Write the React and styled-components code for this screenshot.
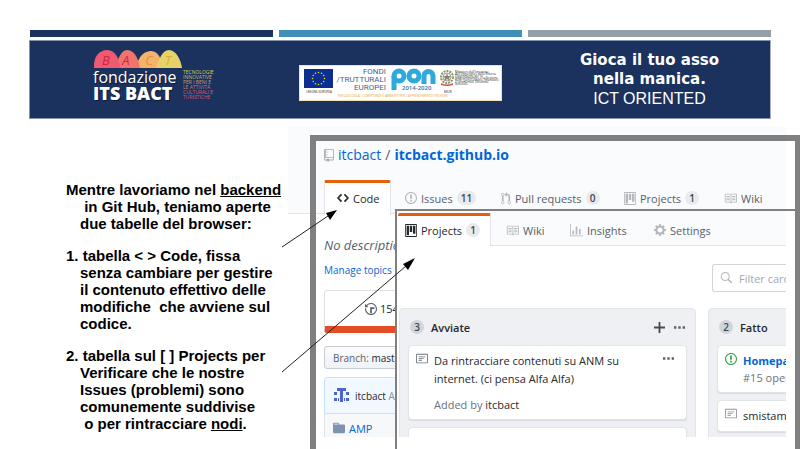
import React from "react";
import styled, { createGlobalStyle, css } from "styled-components";

const ui = `"Open Sans", "Noto Sans", sans-serif`;
const deck = `"Liberation Sans", Arial, sans-serif`;

const GlobalStyle = createGlobalStyle`
  * { box-sizing: border-box; }
  body { margin: 0; background: #fff; }
  h1, h2, h3, p { margin: 0; padding: 0; font-size: inherit; font-weight: inherit; }
  a { color: inherit; text-decoration: none; }
  button { font: inherit; color: inherit; background: none; border: 0; padding: 0; }
`;

const Slide = styled.div`
  display: flex;
  flex-direction: column;
  height: 100vh;
  padding-top: 30px;
  overflow: hidden;
`;

const Stripes = styled.div`
  display: grid;
  grid-template-columns: repeat(3, 1fr);
  gap: 6px;
  margin: 0 29px 3px 30px;
`;

const Stripe = styled.span`
  height: 7px;
  background: ${(p) => p.$tone};
`;

const Banner = styled.header`
  display: grid;
  grid-template-columns: 269px 1fr 241px;
  margin: 0 29px;
  height: 79px;
  background: #1b325f;
  border: 1px solid #8493ad;
  border-right-color: #a9b3c5;
  font-family: ${deck};
  color: #fff;
`;

const Foundation = styled.div`
  display: grid;
  grid-template-columns: 88px 34px;
  column-gap: 2px;
  align-content: start;
  padding: 9px 0 0 63px;
  font-family: ${ui};
`;

const Domes = styled.svg`
  display: block;
  grid-column: 1 / 3;
  width: 90px;
  height: 18px;
`;

const FoundationName = styled.h2`
  font-size: 16px;
  line-height: 18px;
  font-weight: 500;
  white-space: nowrap;
  text-shadow: 1px 1px 1px #0b1a38;
`;

const FoundationStrong = styled.strong`
  display: block;
  font-size: 18px;
  line-height: 15px;
  font-weight: 800;
`;

const Motto = styled.p`
  font-size: 5px;
  line-height: 5px;
  padding-top: 2px;
  white-space: nowrap;
`;

const MottoLine = styled.span`
  display: block;
  color: ${(p) => p.$tone};
`;

const Funds = styled.div`
  display: grid;
  grid-template-columns: 30px 48px 44px 16px 1fr;
  grid-template-rows: 26px 6px;
  column-gap: 4px;
  width: 203px;
  height: 36px;
  margin-top: 24px;
  padding: 2px 1px 0 4px;
  background: #fff;
  border: 1px solid #f3e3b4;
  color: #4a6485;
  font-family: ${ui};
`;

const FundsLeft = styled.div`
  grid-row: 1 / 3;
  padding-top: 1px;
  font-size: 3px;
  line-height: 8px;
  text-align: center;
  white-space: nowrap;
  color: #222;
`;

const FundsTitle = styled.p`
  font-family: Roboto, sans-serif;
  font-size: 8px;
  line-height: 8px;
  text-align: right;
  white-space: nowrap;
  justify-self: end;
`;

const FundsNote = styled.p`
  grid-area: 2 / 2 / 3 / 5;
  font-size: 3px;
  line-height: 4px;
  white-space: nowrap;
  color: #e2a53a;
`;

const FundsArt = styled.svg`
  display: block;
  overflow: visible;
`;

const Ministry = styled.p`
  font-size: 3px;
  line-height: 2px;
  padding-top: 3px;
  margin-left: -3px;
  color: #222;
`;

const Slogan = styled.h1`
  align-self: center;
  font-size: 16px;
  line-height: 19px;
  text-align: center;
  white-space: nowrap;
`;

const SloganStrong = styled.strong`
  display: block;
  font-family: "DejaVu Sans", ${deck};
  font-size: 15px;
  font-weight: 700;
`;

const Stage = styled.main`
  position: relative;
  display: grid;
  grid-template-columns: 288px minmax(0, 1fr);
  flex: 1;
  min-height: 0;
  margin-top: 7px;
`;

const Notes = styled.section`
  display: flex;
  flex-direction: column;
  gap: 15px;
  padding: 55px 0 0 66px;
  font-family: ${deck};
  font-size: 15px;
  line-height: 17px;
  font-weight: 700;
  color: #000;
`;

const Note = styled.p`
  padding-left: 14px;
  text-indent: -14px;
  white-space: pre;
`;

const Desk = styled.section`
  position: relative;
  min-height: 0;
  overflow: hidden;
`;

const Frame = styled.div`
  position: absolute;
  inset: 9px 0 -20px 22px;
  border: 6px solid #808080;
  border-right-width: 5px;
  pointer-events: none;
`;

const Repo = styled.div`
  height: calc(100% - 12px);
  margin-right: 14px;
  overflow: hidden;
  background: #fff;
  font-family: ${ui};
  color: #24292e;
`;

const RepoHead = styled.header`
  height: 88px;
  padding-left: 36px;
  background: #fafbfc;
  border-bottom: 1px solid #e1e4e8;
`;

const RepoTitle = styled.h2`
  display: flex;
  align-items: center;
  gap: 4px;
  height: 54px;
  padding-top: 4px;
  font-size: 14px;
  line-height: 20px;
  color: #586069;
  white-space: nowrap;
`;

const BlueLink = styled.a`
  color: #0366d6;
  font-weight: ${(p) => (p.$strong ? 700 : 400)};
`;

const Tabs = styled.nav`
  display: grid;
  grid-template-columns: ${(p) => p.$columns};
  height: ${(p) => (p.$short ? "32px" : "34px")};
  font-size: 11px;
`;

const Tab = styled.a`
  display: flex;
  align-items: center;
  gap: 4px;
  padding-top: 2px;
  color: #586069;
  white-space: nowrap;
  ${(p) =>
    p.$active &&
    css`
      padding: 0 0 2px;
      color: #24292e;
      background: #fff;
      border: solid #e1e4e8;
      border-width: 3px 1px 0 0;
      border-top-color: #e36209;
      border-radius: 2px 2px 0 0;
    `}
  ${(p) =>
    p.$first &&
    css`
      margin: 0 14px -1px 0;
      padding-left: 12px;
      border-left-width: 1px;
    `}
`;

const Count = styled.span`
  min-width: 14px;
  padding: 0 4px;
  border-radius: 8px;
  background: ${(p) => (p.$dark ? "#d1d5da" : "#e8eaed")};
  color: #3f464d;
  font-size: 10px;
  line-height: 14px;
  text-align: center;
  font-weight: 600;
`;

const Icon = styled.svg`
  display: block;
  flex: none;
  fill: ${(p) => p.$tone || "#b4b8bd"};
`;

const RepoBody = styled.div`
  padding: 21px 0 0 36px;
  white-space: nowrap;
`;

const Description = styled.p`
  font-size: 13px;
  line-height: 20px;
  font-style: italic;
  color: #586069;
`;

const Topics = styled.p`
  padding-top: 6px;
  font-size: 10px;
  line-height: 18px;
`;

const Commits = styled.div`
  display: flex;
  align-items: center;
  gap: 3px;
  height: 43px;
  margin-top: 11px;
  padding-left: 40px;
  border: 1px solid #dfe2e5;
  border-bottom: 7px solid #e34c26;
  border-radius: 3px;
  font-size: 11px;
  color: #24292e;
`;

const Branch = styled.button`
  display: block;
  height: 23px;
  margin: 13px 0 8px;
  padding: 0 8px;
  border: 1px solid #c9ccd0;
  border-radius: 3px;
  background: linear-gradient(#fafbfc, #eff3f6);
  font-size: 10px;
  color: #586069;
`;

const Dark = styled.strong`
  color: #24292e;
  font-weight: 500;
`;

const Commit = styled.div`
  display: flex;
  align-items: center;
  gap: 6px;
  height: 37px;
  padding-left: 9px;
  border: 1px solid #c8e1ff;
  border-radius: 3px 3px 0 0;
  background: #f1f8ff;
  font-size: 10px;
  color: #8a929a;
`;

const FileRow = styled.div`
  display: flex;
  align-items: center;
  gap: 4px;
  height: 28px;
  padding-left: 8px;
  border-left: 1px solid #dfe2e5;
  background: #f6f8fa;
  font-size: 11px;
`;

const BoardWindow = styled.div`
  position: absolute;
  inset: 83px 5px -20px 107px;
  border: 2px solid #808080;
  border-right: 0;
  background: #fff;
`;

const Board = styled.div`
  height: calc(100% - 30px);
  margin-right: 9px;
  overflow: hidden;
  font-family: ${ui};
  color: #24292e;
  white-space: nowrap;
`;

const BoardTabs = styled.div`
  padding: 2px 0 0 1px;
  background: #fafbfc;
  border-bottom: 1px solid #e1e4e8;
`;

const BoardTab = styled(Tab)`
  ${(p) =>
    p.$active &&
    css`
      margin: 0 15px -1px 0;
      padding-left: 7px;
    `}
`;

const Filter = styled.label`
  display: flex;
  align-items: center;
  gap: 7px;
  height: 28px;
  margin: 18px 0 16px 315px;
  padding-left: 7px;
  border: 1px solid #d1d5da;
  border-right: 0;
  border-radius: 3px 0 0 3px;
`;

const FilterInput = styled.input`
  flex: 1;
  min-width: 0;
  padding: 0;
  border: 0;
  background: none;
  font-family: ${ui};
  font-size: 11px;
  color: #24292e;
  &::placeholder { color: #a3aab1; opacity: 1; }
`;

const Columns = styled.div`
  display: grid;
  grid-template-columns: 297px 297px;
  gap: 12px;
  margin-left: 2px;
`;

const Column = styled.section`
  display: flex;
  flex-direction: column;
  gap: 7px;
  height: 200px;
  padding: 0 8px;
  border: 1px solid #e1e4e8;
  border-radius: 4px;
  background: #eff0f3;
`;

const ColumnHead = styled.header`
  display: flex;
  align-items: center;
  gap: 7px;
  height: 36px;
  margin-bottom: -7px;
  padding: 0 2px;
  font-size: 11px;
`;

const ColumnTitle = styled.h3`
  flex: 1;
  font-weight: 600;
`;

const IconButton = styled.button`
  display: flex;
  margin-left: 2px;
`;

const Card = styled.article`
  display: grid;
  grid-template-columns: 12px minmax(0, 1fr) auto;
  column-gap: 6px;
  align-items: start;
  padding: 6px 12px 6px 7px;
  border: 1px solid #e1e4e8;
  border-radius: 4px;
  background: #fff;
  box-shadow: 0 1px 1px #d8dade;
  font-size: 11px;
  line-height: 18px;
`;

const CardText = styled.p`
  white-space: pre-line;
`;

const Meta = styled.p`
  padding-top: ${(p) => (p.$spaced ? "9px" : "0")};
  line-height: 16px;
  color: #6a737d;
`;

const Pointers = styled.svg`
  position: absolute;
  left: 282px;
  top: 80px;
  pointer-events: none;
`;

const glyphs = {
  repo: [12, "M4 9H3V8h1v1zm0-3H3v1h1V6zm0-2H3v1h1V4zm0-2H3v1h1V2zm8-1v12c0 .55-.45 1-1 1H6v2l-1.5-1.5L3 16v-2H1c-.55 0-1-.45-1-1V1c0-.55.45-1 1-1h10c.55 0 1 .45 1 1zm-1 10H1v2h2v-1h3v1h5v-2zm0-10H2v9h9V1z"],
  code: [14, "M9.5 3L8 4.5 11.5 8 8 11.5 9.5 13 14 8 9.5 3zm-5 0L0 8l4.5 5L6 11.5 2.5 8 6 4.5 4.5 3z"],
  issue: [14, "M7 2.3c3.14 0 5.7 2.56 5.7 5.7s-2.56 5.7-5.7 5.7A5.71 5.71 0 0 1 1.3 8c0-3.14 2.56-5.7 5.7-5.7zM7 1C3.14 1 0 4.14 0 8s3.14 7 7 7 7-3.14 7-7-3.14-7-7-7zm1 3H6v5h2V4zm0 6H6v2h2v-2z"],
  pull: [12, "M11 11.28V5c-.03-.78-.34-1.47-.94-2.06C9.46 2.35 8.78 2.03 8 2H7V0L4 3l3 3V4h1c.27.02.48.11.69.31.21.2.3.42.31.69v6.28A1.993 1.993 0 0 0 10 15a1.993 1.993 0 0 0 1-3.72zm-1 2.92c-.66 0-1.2-.55-1.2-1.2 0-.65.55-1.2 1.2-1.2.65 0 1.2.55 1.2 1.2 0 .65-.55 1.2-1.2 1.2zM4 3c0-1.11-.89-2-2-2a1.993 1.993 0 0 0-1 3.72v6.56A1.993 1.993 0 0 0 2 15a1.993 1.993 0 0 0 1-3.72V4.72c.59-.34 1-.98 1-1.72zm-.8 10c0 .66-.55 1.2-1.2 1.2-.65 0-1.2-.55-1.2-1.2 0-.65.55-1.2 1.2-1.2.65 0 1.2.55 1.2 1.2zM2 4.2C1.34 4.2.8 3.65.8 3c0-.65.55-1.2 1.2-1.2.65 0 1.2.55 1.2 1.2 0 .65-.55 1.2-1.2 1.2z"],
  project: [15, "M10 12h3V2h-3v10zm-4-2h3V2H6v8zm-4 4h3V2H2v12zm-1 1h13V1H1v14zM14 0H1a1 1 0 0 0-1 1v14a1 1 0 0 0 1 1h13a1 1 0 0 0 1-1V1a1 1 0 0 0-1-1z"],
  book: [16, "M3 5h4v1H3V5zm0 3h4V7H3v1zm0 2h4V9H3v1zm11-5h-4v1h4V5zm0 2h-4v1h4V7zm0 2h-4v1h4V9zm2-6v9c0 .55-.45 1-1 1H9.5l-1 1-1-1H2c-.55 0-1-.45-1-1V3c0-.55.45-1 1-1h5.5l1 1 1-1H15c.55 0 1 .45 1 1zm-8 .5L7.5 3H2v9h6V3.5zm7-.5H9.5l-.5.5V12h6V3z"],
  graph: [16, "M16 14v1H0V0h1v14h15zM5 13H3V8h2v5zm4 0H7V3h2v10zm4 0h-2V6h2v7z"],
  gear: [14, "M14 8.77v-1.6l-1.94-.64-.45-1.09.88-1.84-1.13-1.13-1.81.91-1.09-.45-.69-1.92h-1.6l-.63 1.94-1.11.45-1.84-.88-1.13 1.13.91 1.81-.45 1.09L0 7.23v1.59l1.94.64.45 1.09-.88 1.84 1.13 1.13 1.81-.91 1.09.45.69 1.92h1.59l.63-1.94 1.11-.45 1.84.88 1.13-1.13-.92-1.81.47-1.09L14 8.75v.02zM7 11c-1.66 0-3-1.34-3-3s1.34-3 3-3 3 1.34 3 3-1.34 3-3 3z"],
  note: [14, "M3 10h4V9H3v1zm0-2h6V7H3v1zm0-2h8V5H3v1zm10 6H1V3h12v9zM1 2c-.55 0-1 .45-1 1v9c0 .55.45 1 1 1h12c.55 0 1-.45 1-1V3c0-.55-.45-1-1-1H1z"],
  plus: [12, "M12 9H7v5H5V9H0V7h5V2h2v5h5v2z"],
  dots: [14, "M0 6.500h3v3H0zM5.500 6.500h3v3h-3zM11 6.500h3v3h-3z"],
  search: [16, "M15.7 13.3l-3.81-3.83A5.93 5.93 0 0 0 13 6c0-3.31-2.69-6-6-6S1 2.69 1 6s2.69 6 6 6c1.3 0 2.48-.41 3.47-1.11l3.83 3.81c.19.2.45.3.7.3.25 0 .52-.09.7-.3a.996.996 0 0 0 0-1.41v.01zM7 10.7c-2.59 0-4.7-2.11-4.7-4.7 0-2.59 2.11-4.7 4.7-4.7 2.59 0 4.7 2.11 4.7 4.7 0 2.59-2.11 4.7-4.7 4.7z"],
  folder: [14, "M13 4H7V3c0-.66-.31-1-1-1H1c-.55 0-1 .45-1 1v10c0 .55.45 1 1 1h12c.55 0 1-.45 1-1V5c0-.55-.45-1-1-1zM6 4H1V3h5v1z"],
  history: [14, "M8 13H6V6h5v2H8v5zM7 1C4.81 1 2.87 2.02 1.59 3.59L0 2v4h4L2.5 4.5C3.55 3.17 5.17 2.3 7 2.3c3.14 0 5.7 2.56 5.7 5.7s-2.56 5.7-5.7 5.7A5.71 5.71 0 0 1 1.3 8c0-.34.03-.67.09-1H.08C.03 7.33 0 7.66 0 8c0 3.86 3.14 7 7 7s7-3.14 7-7-3.14-7-7-7z"],
};

function Glyph({ name, width = 12, tone }) {
  const [w, d] = glyphs[name];
  return (
    <Icon $tone={tone} width={width} height={Math.round((width * 16) / w)} viewBox={`0 0 ${w} 16`} aria-hidden="true">
      <path fillRule="evenodd" d={d} />
    </Icon>
  );
}

const motto = [
  ["TECNOLOGIE", "#d9cd5b"],
  ["INNOVATIVE", "#d2b660"],
  ["PER I BENI E", "#d09a6a"],
  ["LE   ATTIVITÀ", "#cf7c6c"],
  ["CULTURALI E", "#d8606f"],
  ["TURISTICHE", "#d8526b"],
];

function BactLogo() {
  return (
    <Foundation>
      <Domes viewBox="0 0 90 18" fontFamily="Open Sans" fontStyle="italic" fontSize="13" textAnchor="middle">
        <path d="M44 18c0-9 5-16 13-17s12 8 12 17z" fill="#f6b26b" />
        <path d="M63 18C66 10 69 0 76 0s12 10 13 18z" fill="#e6d268" />
        <path d="M22 18C25 9 28 0 34 0s11 6 13 18z" fill="#f1746e" />
        <path d="M1 18C0 6 7 0 14 0s12 6 13 18z" fill="#ee5a72" />
        <text x="13" y="15" fill="#d3213f">B</text>
        <text x="33" y="15" fill="#dc2347">A</text>
        <text x="56" y="15" fill="#dc9440">C</text>
        <text x="75" y="15" fill="#cdb53a">T</text>
      </Domes>
      <FoundationName>
        fondazione
        <FoundationStrong>ITS BACT</FoundationStrong>
      </FoundationName>
      <Motto>
        {motto.map(([t, tone]) => (
          <MottoLine key={t} $tone={tone}>{t}</MottoLine>
        ))}
      </Motto>
    </Foundation>
  );
}

function FundsLogo() {
  const stars = Array.from({ length: 12 }, (_, i) => {
    const a = (i * Math.PI) / 6;
    return <circle key={i} cx={14.5 + 6 * Math.sin(a)} cy={9.5 - 6 * Math.cos(a)} r="0.8" fill="#f5d90a" />;
  });
  return (
    <Funds>
      <FundsLeft>
        <FundsArt width="29" height="19" viewBox="0 0 29 19">
          <rect width="29" height="19" fill="#0b2f8f" />
          {stars}
        </FundsArt>
        UNIONE EUROPEA
      </FundsLeft>
      <FundsTitle>FONDI<br />/TRUTTURALI<br />EUROPEI</FundsTitle>
      <FundsArt width="44" height="25" viewBox="0 0 44 25">
        <g fill="none" stroke="#2fa9dc" strokeWidth="5">
          <circle cx="9" cy="8" r="5" />
          <path d="M4 8v14" />
          <circle cx="24" cy="8" r="5" />
          <path d="M34 16V8a4.500 4.500 0 0 1 9 0V16" />
        </g>
        <text x="12" y="22" fontFamily="Open Sans" fontWeight="600" fontSize="6" fill="#3d6f98">2014-2020</text>
      </FundsArt>
      <FundsArt width="16" height="26" viewBox="0 0 16 26">
        <circle cx="9" cy="9" r="6" fill="none" stroke="#7d9a66" strokeWidth="2" strokeDasharray="2 1" />
        <circle cx="9" cy="9" r="4" fill="#f2efe9" stroke="#a79f94" />
        <path d="M9 5l1 3h3l-2 2 1 3-3-2-3 2 1-3-2-2h3z" fill="#8c8379" />
        <path d="M3 15q6 3 12 0v2q-6 2-12 0z" fill="#cf5c50" />
        <text x="6" y="25" fontFamily="Open Sans" fontSize="3" fill="#222">MIUR</text>
      </FundsArt>
      <Ministry>
        Ministero dell'Istruzione, dell'Università e della Ricerca. Dipartimento per la programmazione e la Gestione delle risorse umane, finanziarie e strumentali. Direzione Generale
      </Ministry>
      <FundsNote>PER LA SCUOLA - COMPETENZE E AMBIENTI PER L'APPRENDIMENTO (FSE-FESR)</FundsNote>
    </Funds>
  );
}

export default function App() {
  return (
    <Slide>
      <GlobalStyle />
      <Stripes>
        <Stripe $tone="#1b325f" />
        <Stripe $tone="#418fb9" />
        <Stripe $tone="#969fa9" />
      </Stripes>
      <Banner>
        <BactLogo />
        <FundsLogo />
        <Slogan>
          <SloganStrong>Gioca il tuo asso<br />nella manica.</SloganStrong>
          ICT ORIENTED
        </Slogan>
      </Banner>
      <Stage>
        <Notes>
          <Note>
            Mentre lavoriamo nel <u>backend</u>{"\n"} in Git Hub, teniamo aperte{"\n"}due tabelle del browser:
          </Note>
          <Note>{"1. tabella < > Code, fissa\nsenza cambiare per gestire\nil contenuto effettivo delle\nmodifiche  che avviene sul\ncodice."}</Note>
          <Note>
            {"2. tabella sul [ ] Projects per\nVerificare che le nostre\nIssues (problemi) sono\ncomunemente suddivise\n o per rintracciare "}<u>nodi</u>.
          </Note>
        </Notes>
        <Desk>
          <Repo>
            <RepoHead>
              <RepoTitle>
                <Glyph name="repo" width={10} tone="#a3aab1" />
                <BlueLink href="#owner">itcbact</BlueLink>/<BlueLink href="#repo" $strong>itcbact.github.io</BlueLink>
              </RepoTitle>
              <Tabs $columns="81px 96px 123px 100px 1fr">
                <Tab href="#code" $active $first><Glyph name="code" tone="#24292e" /> Code</Tab>
                <Tab href="#issues"><Glyph name="issue" /> Issues <Count>11</Count></Tab>
                <Tab href="#pulls"><Glyph name="pull" width={10} /> Pull requests <Count>0</Count></Tab>
                <Tab href="#projects"><Glyph name="project" /> Projects <Count>1</Count></Tab>
                <Tab href="#wiki"><Glyph name="book" width={13} /> Wiki</Tab>
              </Tabs>
            </RepoHead>
            <RepoBody>
              <Description>No description</Description>
              <Topics><BlueLink href="#topics">Manage topics</BlueLink></Topics>
              <Commits><Glyph name="history" tone="#586069" /><Dark>154</Dark></Commits>
              <Branch type="button">Branch: <Dark>master</Dark></Branch>
              <Commit>
                <Icon width="15" height="15" viewBox="0 0 15 15" $tone="#4d63cf">
                  <path d="M3 0h9v3H3zM0 4h3v3H0zM12 4h3v3h-3zM6 3h3v11H6zM0 10h3v3H0zM4 10h1v3H4zM10 10h1v3h-1zM12 10h3v3h-3z" />
                </Icon>
                <span><Dark>itcbact</Dark> Add files</span>
              </Commit>
              <FileRow><Glyph name="folder" tone="#7d94ae" /><BlueLink href="#amp">AMP</BlueLink></FileRow>
            </RepoBody>
          </Repo>
          <BoardWindow>
            <Board>
              <BoardTabs>
                <Tabs $short $columns="108px 64px 84px 1fr">
                  <BoardTab href="#p" $active><Glyph name="project" tone="#24292e" /> Projects <Count>1</Count></BoardTab>
                  <BoardTab href="#w"><Glyph name="book" width={13} /> Wiki</BoardTab>
                  <BoardTab href="#i"><Glyph name="graph" width={13} /> Insights</BoardTab>
                  <BoardTab href="#s"><Glyph name="gear" /> Settings</BoardTab>
                </Tabs>
              </BoardTabs>
              <Filter>
                <Glyph name="search" tone="#b4b8bd" />
                <FilterInput type="text" placeholder="Filter cards" aria-label="Filter cards" />
              </Filter>
              <Columns>
                <Column>
                  <ColumnHead>
                    <Count $dark>3</Count>
                    <ColumnTitle>Avviate</ColumnTitle>
                    <IconButton type="button" aria-label="Add"><Glyph name="plus" width={11} tone="#444d56" /></IconButton>
                    <IconButton type="button" aria-label="Column menu"><Glyph name="dots" width={11} tone="#586069" /></IconButton>
                  </ColumnHead>
                  <Card>
                    <Glyph name="note" tone="#6a737d" />
                    <div>
                      <CardText>{"Da rintracciare contenuti su ANM su\ninternet. (ci pensa Alfa Alfa)"}</CardText>
                      <Meta $spaced>Added by <Dark>itcbact</Dark></Meta>
                    </div>
                    <IconButton type="button" aria-label="Card menu"><Glyph name="dots" width={11} tone="#586069" /></IconButton>
                  </Card>
                  <Card><CardText>&nbsp;</CardText></Card>
                </Column>
                <Column>
                  <ColumnHead>
                    <Count $dark>2</Count>
                    <ColumnTitle>Fatto</ColumnTitle>
                  </ColumnHead>
                  <Card>
                    <Glyph name="issue" tone="#28a745" />
                    <div>
                      <CardText><BlueLink href="#home" $strong>Homepage</BlueLink></CardText>
                      <Meta>#15 opened</Meta>
                    </div>
                  </Card>
                  <Card>
                    <Glyph name="note" tone="#8a929a" />
                    <CardText>smistamento</CardText>
                  </Card>
                </Column>
              </Columns>
            </Board>
          </BoardWindow>
          <Frame />
        </Desk>
        <Pointers width="140" height="170" viewBox="0 0 140 170" aria-hidden="true">
          <g stroke="#222" strokeWidth="1">
            <path d="M0 41L46 10M0 166L124 60" />
          </g>
          <path d="M55 4L44 7L48 14zM133 52L121 58L126 64z" />
        </Pointers>
      </Stage>
    </Slide>
  );
}
